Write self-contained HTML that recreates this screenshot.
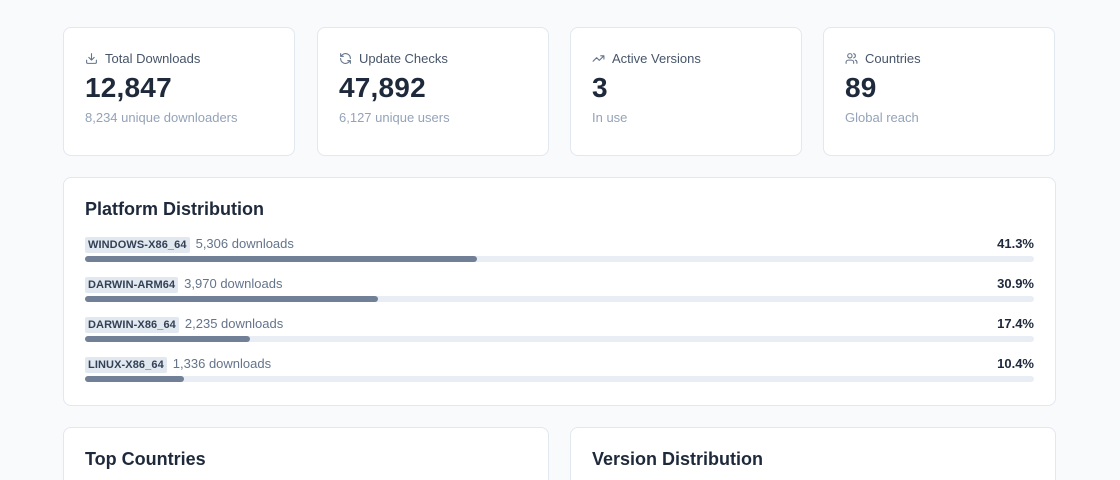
<!DOCTYPE html>
<html style="width:1120px;height:480px;overflow:hidden"><head><meta charset="utf-8"><style>
*{box-sizing:border-box;margin:0;padding:0}
body{width:1120px;height:480px;overflow:hidden;background:#f8fafc;font-family:"Liberation Sans",sans-serif;color:#1e293b;position:relative}
.card{position:absolute;background:#fff;border:1px solid #e2e8f0;border-radius:8px}
.stat{top:27px;height:129px;width:232px;padding:0 21px}
.lab{position:absolute;left:21px;top:23px;font-size:13px;color:#475569;display:flex;align-items:center;gap:7px}
.lab svg{width:13px;height:13px;stroke:#64748b;fill:none;stroke-width:2;stroke-linecap:round;stroke-linejoin:round}
.num{position:absolute;left:21px;top:44px;font-size:28px;font-weight:bold;color:#1e293b;letter-spacing:0.2px}
.sub{position:absolute;left:21px;top:82px;font-size:13px;color:#94a3b8}
h2{position:absolute;left:21px;font-size:18px;font-weight:bold;color:#1e293b}
.row{position:absolute;left:21px;right:21px;height:34px}
.tag{display:inline-block;background:#e2e8f0;font-size:11px;font-weight:bold;color:#334155;padding:2px 3px;border-radius:2px;letter-spacing:.1px}
.dl{font-size:13px;color:#64748b;margin-left:6px}
.pct{position:absolute;right:0;top:1px;font-size:13px;font-weight:bold;color:#1e293b}
.track{position:absolute;left:0;right:0;top:21px;height:6px;background:#e9eef5;border-radius:3px}
.fill{height:6px;background:#718096;border-radius:3px}
.bot{top:427px;height:53px;border-bottom:none;border-radius:8px 8px 0 0}
</style></head><body>
<div class="card stat" style="left:63px"><div class="lab"><svg viewBox="0 0 24 24"><path d="M21 15v4a2 2 0 0 1-2 2H5a2 2 0 0 1-2-2v-4M7 10l5 5 5-5M12 15V3"/></svg>Total Downloads</div><div class="num">12,847</div><div class="sub">8,234 unique downloaders</div></div>
<div class="card stat" style="left:317px"><div class="lab"><svg viewBox="0 0 24 24"><path d="M21 12a9 9 0 0 0-15-6.7L3 8M3 3v5h5M3 12a9 9 0 0 0 15 6.7l3-2.7M21 21v-5h-5"/></svg>Update Checks</div><div class="num">47,892</div><div class="sub">6,127 unique users</div></div>
<div class="card stat" style="left:570px"><div class="lab"><svg viewBox="0 0 24 24"><path d="M22 7l-8.5 8.5-5-5L2 17M16 7h6v6"/></svg>Active Versions</div><div class="num">3</div><div class="sub">In use</div></div>
<div class="card stat" style="left:823px"><div class="lab"><svg viewBox="0 0 24 24"><path d="M16 21v-2a4 4 0 0 0-4-4H6a4 4 0 0 0-4 4v2M9 3a4 4 0 1 1 0 8 4 4 0 0 1 0-8M22 21v-2a4 4 0 0 0-3-3.9M16 3.1a4 4 0 0 1 0 7.8"/></svg>Countries</div><div class="num">89</div><div class="sub">Global reach</div></div>

<div class="card" style="left:63px;top:177px;width:993px;height:229px">
<h2 style="top:21px">Platform Distribution</h2>
<div class="row" style="top:57px"><span class="tag">WINDOWS-X86_64</span><span class="dl">5,306 downloads</span><span class="pct">41.3%</span><div class="track"><div class="fill" style="width:41.3%"></div></div></div>
<div class="row" style="top:97px"><span class="tag">DARWIN-ARM64</span><span class="dl">3,970 downloads</span><span class="pct">30.9%</span><div class="track"><div class="fill" style="width:30.9%"></div></div></div>
<div class="row" style="top:137px"><span class="tag">DARWIN-X86_64</span><span class="dl">2,235 downloads</span><span class="pct">17.4%</span><div class="track"><div class="fill" style="width:17.4%"></div></div></div>
<div class="row" style="top:177px"><span class="tag">LINUX-X86_64</span><span class="dl">1,336 downloads</span><span class="pct">10.4%</span><div class="track"><div class="fill" style="width:10.4%"></div></div></div>
</div>

<div class="card bot" style="left:63px;width:486px"><h2 style="top:21px">Top Countries</h2></div>
<div class="card bot" style="left:570px;width:486px"><h2 style="top:21px">Version Distribution</h2></div>
</body></html>
